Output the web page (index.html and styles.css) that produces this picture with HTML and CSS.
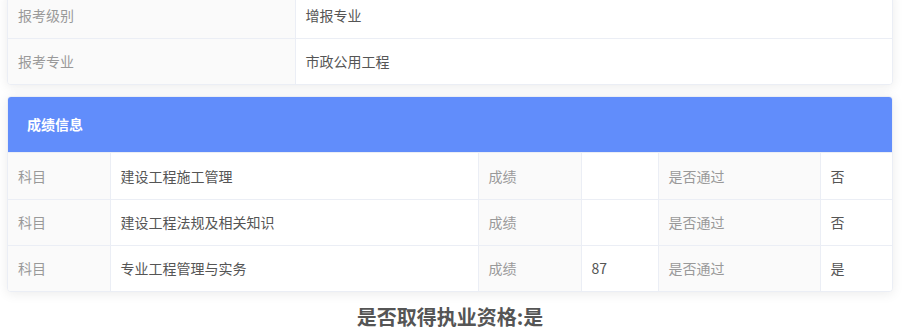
FILE: index.html
```html
<!DOCTYPE html>
<html lang="zh">
<head>
<meta charset="utf-8">
<link rel="stylesheet" href="styles.css">
</head>
<body>
<div class="page">
  <div class="card card-top">
    <table class="info">
      <colgroup><col class="c-label"><col></colgroup>
      <tr><td class="lbl">报考级别</td><td class="val">增报专业</td></tr>
      <tr><td class="lbl">报考专业</td><td class="val">市政公用工程</td></tr>
    </table>
  </div>
  <div class="card card-score">
    <div class="card-head">成绩信息</div>
    <table class="score">
      <colgroup>
        <col class="s1"><col class="s2"><col class="s3"><col class="s4"><col class="s5"><col>
      </colgroup>
      <tr><td class="lbl">科目</td><td class="val">建设工程施工管理</td><td class="lbl">成绩</td><td class="val"></td><td class="lbl">是否通过</td><td class="val">否</td></tr>
      <tr><td class="lbl">科目</td><td class="val">建设工程法规及相关知识</td><td class="lbl">成绩</td><td class="val"></td><td class="lbl">是否通过</td><td class="val">否</td></tr>
      <tr><td class="lbl">科目</td><td class="val">专业工程管理与实务</td><td class="lbl">成绩</td><td class="val">87</td><td class="lbl">是否通过</td><td class="val">是</td></tr>
    </table>
  </div>
  <div class="result">是否取得执业资格:是</div>
</div>
</body>
</html>
```
FILE: styles.css
```css
html, body {
  margin: 0;
  padding: 0;
  background: #fff;
}
body {
  font-family: "Noto Sans CJK SC", "Liberation Sans", sans-serif;
  font-size: 14px;
  overflow: hidden;
}
.page {
  width: 886px;
  padding-left: 7px;
}
.card {
  background: #fff;
  border: 1px solid #ebeef5;
  border-radius: 4px;
  box-shadow: 0 2px 12px 0 rgba(0, 0, 0, 0.08);
  overflow: hidden;
  box-sizing: border-box;
}
.card-top {
  margin-top: -9px;
}
.card-score {
  margin-top: 11px;
}
.card-head {
  height: 55px;
  background: #618dfb;
  color: #fff;
  font-weight: bold;
  font-size: 14px;
  line-height: 55px;
  padding-left: 19px;
  border-bottom: 1px solid #ebeef5;
}
table {
  width: 100%;
  border-collapse: collapse;
  table-layout: fixed;
}
td {
  height: 46px;
  padding: 0 10px;
  box-sizing: border-box;
  border: 1px solid #ebeef5;
  vertical-align: middle;
  line-height: 20px;
}
tr:first-child td { border-top: none; }
tr:last-child td { border-bottom: none; }
td:first-child { border-left: none; }
td:last-child { border-right: none; }
.lbl {
  background: #fafafa;
  color: #999;
}
.val {
  background: #fff;
  color: #555;
}
.c-label { width: 287px; }
.s1 { width: 102px; }
.s2 { width: 368px; }
.s3 { width: 103px; }
.s4 { width: 77px; }
.s5 { width: 162px; }
.result {
  text-align: center;
  font-size: 20px;
  font-weight: bold;
  color: #555;
  line-height: 28px;
  margin-top: 11px;
}
```
